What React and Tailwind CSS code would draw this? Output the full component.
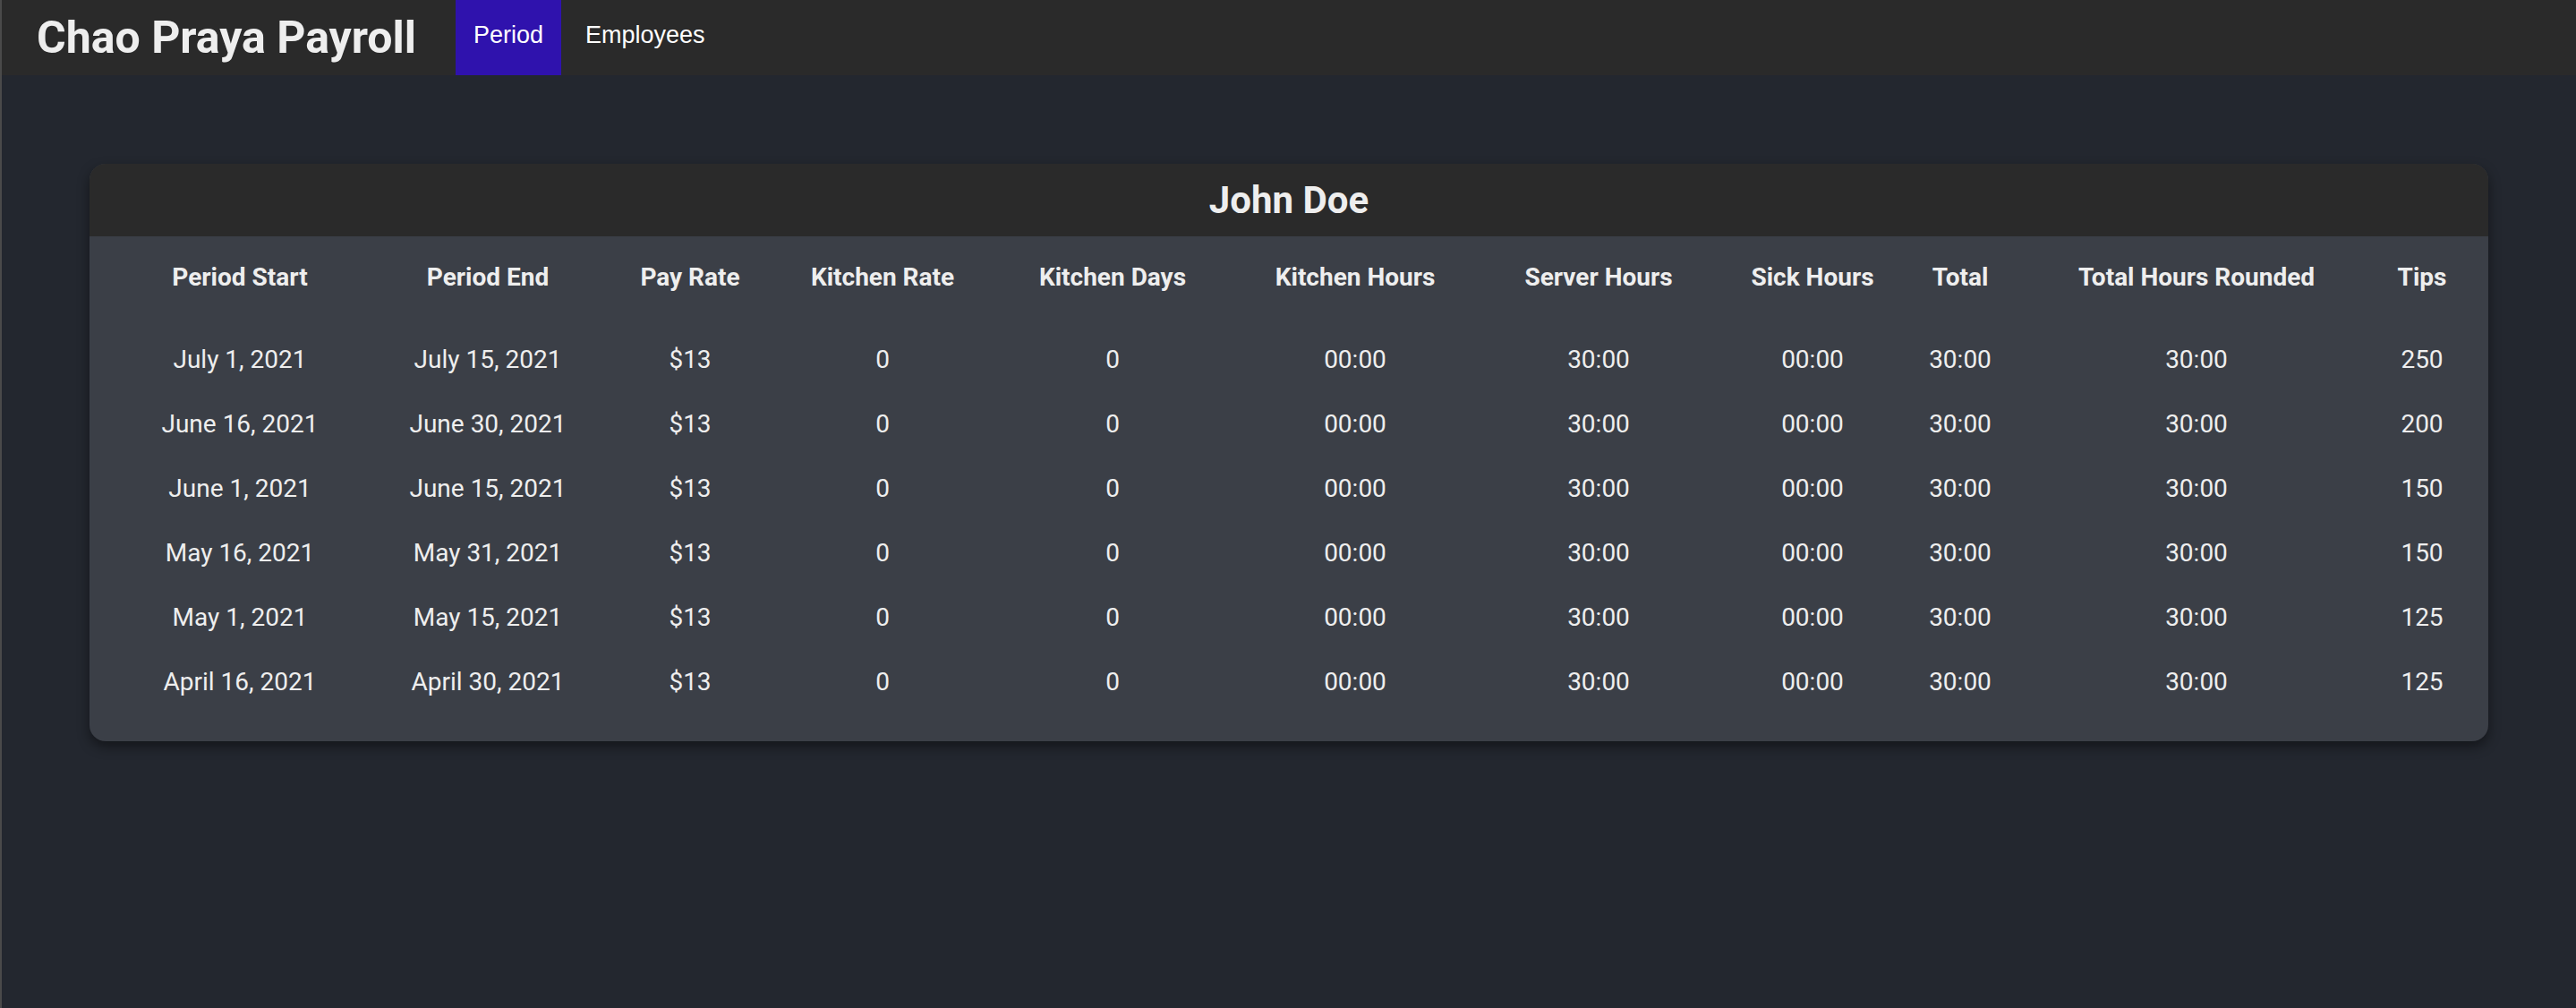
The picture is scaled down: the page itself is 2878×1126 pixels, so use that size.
import React from 'react';

const COLUMNS = [
  { label: 'Period Start', key: 'start' },
  { label: 'Period End', key: 'end' },
  { label: 'Pay Rate', key: 'rate' },
  { label: 'Kitchen Rate', key: 'kitchenRate' },
  { label: 'Kitchen Days', key: 'kitchenDays' },
  { label: 'Kitchen Hours', key: 'kitchenHours' },
  { label: 'Server Hours', key: 'serverHours' },
  { label: 'Sick Hours', key: 'sickHours' },
  { label: 'Total', key: 'total' },
  { label: 'Total Hours Rounded', key: 'rounded' },
  { label: 'Tips', key: 'tips' },
];

const row = (start, end, tips) => ({
  start,
  end,
  rate: '$13',
  kitchenRate: '0',
  kitchenDays: '0',
  kitchenHours: '00:00',
  serverHours: '30:00',
  sickHours: '00:00',
  total: '30:00',
  rounded: '30:00',
  tips,
});

const PERIODS = [
  row('July 1, 2021', 'July 15, 2021', '250'),
  row('June 16, 2021', 'June 30, 2021', '200'),
  row('June 1, 2021', 'June 15, 2021', '150'),
  row('May 16, 2021', 'May 31, 2021', '150'),
  row('May 1, 2021', 'May 15, 2021', '125'),
  row('April 16, 2021', 'April 30, 2021', '125'),
];

const gridCols =
  'grid grid-cols-[336px_218px_234px_196px_318px_224px_320px_158px_172px_356px_148px]';

const NavBar = () => (
  <nav className="flex items-center h-[84px] bg-[#2a2a2a]">
    <h1 className="pl-[39px] pr-[44px] text-[50px] font-bold text-[#eeeeee] font-['Roboto',sans-serif] leading-none">
      Chao Praya Payroll
    </h1>
    <a className="flex items-center h-full px-[20px] pb-[6px] bg-[#2f12ad] text-white text-[27px] font-['Liberation_Sans',Arial,sans-serif]">
      Period
    </a>
    <a className="flex items-center h-full px-[27px] pb-[6px] text-white text-[27px] font-['Liberation_Sans',Arial,sans-serif]">
      Employees
    </a>
  </nav>
);

export default function App() {
  return (
    <div className="min-h-screen border-l-2 border-[#4a4a4a] bg-[#23272f] font-['Roboto',sans-serif] text-[#eeeeee]">
      <NavBar />
      <main className="px-[98px] pt-[99px]">
        <section className="rounded-[18px] overflow-hidden bg-[#3b3f47] shadow-[0_6px_14px_rgba(0,0,0,0.45)]">
          <div className="flex items-center justify-center h-[81px] bg-[#2a2a2a]">
            <h2 className="text-[42px] font-bold leading-none">John Doe</h2>
          </div>
          <div className="pt-[10px] pb-[30px]">
            <div className={`${gridCols} h-[72px] items-center mb-[20px]`}>
              {COLUMNS.map(col => (
                <div key={col.key} className="text-center text-[28px] font-bold whitespace-nowrap">
                  {col.label}
                </div>
              ))}
            </div>
            {PERIODS.map((p, i) => (
              <div key={i} className={`${gridCols} h-[72px] items-center`}>
                {COLUMNS.map(col => (
                  <div key={col.key} className="text-center text-[28px] whitespace-nowrap">
                    {p[col.key]}
                  </div>
                ))}
              </div>
            ))}
          </div>
        </section>
      </main>
    </div>
  );
}
